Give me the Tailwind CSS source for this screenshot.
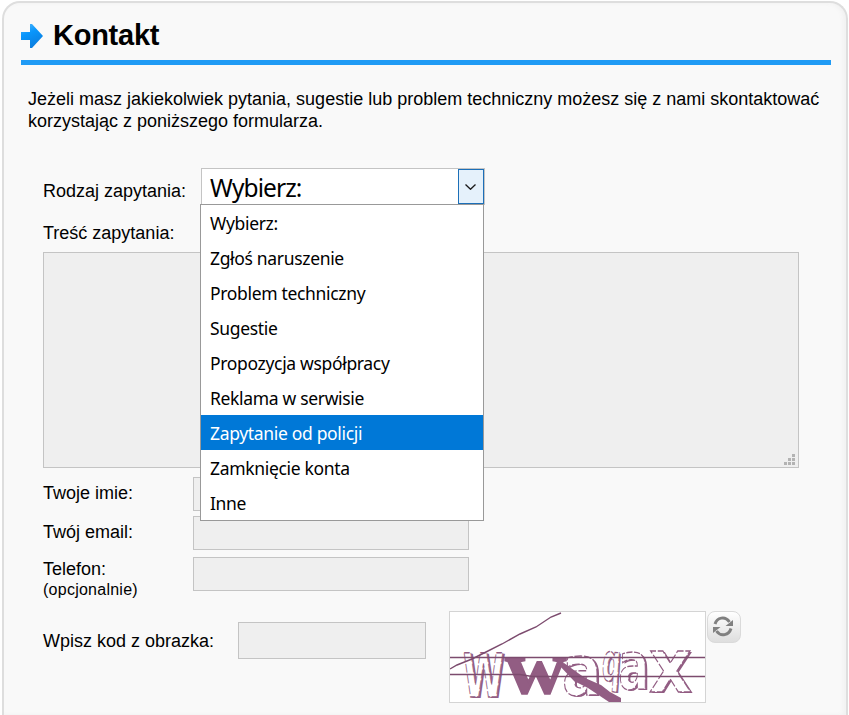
<!DOCTYPE html>
<html lang="pl">
<head>
<meta charset="utf-8">
<title>Kontakt</title>
<script src="https://cdn.jsdelivr.net/npm/@tailwindcss/browser@4"></script>
</head>
<body class="h-[715px] overflow-hidden bg-white pt-px pl-0.5 font-['Liberation_Sans',Arial,sans-serif] text-[18px] leading-[22px] text-black">
<main class="h-[714px] w-[846px] rounded-t-[18px] border-2 border-b-0 border-[#dedede] bg-[#f9f9f9] pl-[17px] pr-[14px] shadow-[inset_-3px_0_4px_#f1f1f1]">
  <header class="flex h-[62px] w-[810px] items-start border-b-[5px] border-[#209bf5]">
    <svg class="mt-[21px] h-6 w-[22px]" viewBox="0 0 22 24">
      <defs><linearGradient id="arrow" x1="0" y1="0" x2="0.4" y2="1"><stop offset="0" stop-color="#57b9fb"/><stop offset=".45" stop-color="#0996fc"/><stop offset="1" stop-color="#0b7fe0"/></linearGradient></defs>
      <path d="M0 8h9V0h2l11 12-11 12H9v-8H0z" fill="url(#arrow)"/>
    </svg>
    <h1 class="mt-[14px] ml-[10px] text-[29px] leading-[36px] font-bold tracking-[-0.25px]">Kontakt</h1>
  </header>
  <p class="mt-[23px] ml-[7px] whitespace-nowrap">Jeżeli masz jakiekolwiek pytania, sugestie lub problem techniczny możesz się z nami skontaktować<br>korzystając z poniższego formularza.</p>

  <form class="mt-[36px] ml-[22px]">
    <div class="relative flex h-[37px]">
      <label class="mt-[12px] w-[158px]">Rodzaj zapytania:</label>
      <div class="flex h-[37px] w-[284px] justify-between border border-[#c4c4c4] bg-white pr-px font-['Noto_Sans',sans-serif]">
        <span class="pl-2 text-[24.500px] leading-[38px] tracking-[-0.9px]">Wybierz:</span>
        <span class="-mr-px flex w-[26px] items-center justify-center border border-[#1c6fb8] bg-[#e5f1fb] pr-[2px]">
          <svg class="h-[6px] w-[11px]" viewBox="0 0 11 6" fill="none" stroke="#1a1a1a" stroke-width="1.3"><path d="M.5.5 5.5 5.3 10.5.5"/></svg>
        </span>
      </div>
      <ul class="absolute top-9 left-[157px] z-10 h-[317px] w-[284px] border border-[#999] bg-white font-['Noto_Sans',sans-serif] text-[17.500px] leading-[36px] tracking-[-0.33px] whitespace-nowrap *:h-[35px] *:pl-[9px]">
        <li>Wybierz:</li>
        <li>Zgłoś naruszenie</li>
        <li>Problem techniczny</li>
        <li>Sugestie</li>
        <li>Propozycja współpracy</li>
        <li>Reklama w serwisie</li>
        <li class="bg-[#0078d7] text-white">Zapytanie od policji</li>
        <li>Zamknięcie konta</li>
        <li>Inne</li>
      </ul>
    </div>
    <div class="mt-[17px] h-[30px]"><label>Treść zapytania:</label></div>
    <div class="flex h-[216px] w-[756px] items-end justify-end border border-[#c4c4c4] bg-[#efefef] pr-[3px] pb-[2px]">
      <svg class="h-[11px] w-[11px]" viewBox="0 0 11 11" fill="#b3b3b3"><path d="M8 0h3v3H8zM4 4h3v3H4zM8 4h3v3H8zM0 8h3v3H0zM4 8h3v3H4zM8 8h3v3H8z"/></svg>
    </div>
    <div class="mt-[9px] flex h-[34px]">
      <label class="mt-[5px] w-[150px]">Twoje imie:</label>
      <div class="h-[34px] w-[276px] border border-[#c4c4c4] bg-[#efefef]"></div>
    </div>
    <div class="mt-[5px] flex h-[34px]">
      <label class="mt-[5px] w-[150px]">Twój email:</label>
      <div class="h-[34px] w-[276px] border border-[#c4c4c4] bg-[#efefef]"></div>
    </div>
    <div class="mt-[7px] flex h-[54px]">
      <label class="mt-px w-[150px]">Telefon:<small class="block text-[16px] leading-5 tracking-[0.25px]">(opcjonalnie)</small></label>
      <div class="h-[34px] w-[276px] border border-[#c4c4c4] bg-[#efefef]"></div>
    </div>
    <div class="flex items-start">
      <label class="mt-[19px] w-[195px]">Wpisz kod z obrazka:</label>
      <div class="mt-[11px] h-[37px] w-[188px] border border-[#c4c4c4] bg-[#efefef]"></div>
      <div class="ml-[23px] h-[92px] w-[257px] border border-[#d4d4d4] bg-white">
        <svg class="h-[90px] w-[255px]" viewBox="0 0 255 90">
          <!-- hollow letters: an offset purple copy gives the heavy right edge -->
          <g font-family="DejaVu Sans" font-weight="bold" fill="#925d83">
            <text transform="translate(15 85.500) scale(.62 1)" font-size="60">W</text>
            <text transform="translate(114 83.500) scale(.84 1)" font-size="70">a</text>
            <text transform="translate(152.500 69) rotate(4) scale(.5 1)" font-size="52">q</text>
            <text transform="translate(170.500 77.500) scale(.68 1)" font-size="66">a</text>
            <text transform="translate(201 81) scale(.88 1)" font-size="75">x</text>
          </g>
          <g font-family="DejaVu Sans" font-weight="bold" fill="#fff" stroke="#925d83" stroke-width="1.300" stroke-dasharray="9 2">
            <text transform="translate(13 84.500) scale(.62 1)" font-size="60">W</text>
            <text transform="translate(112 82.500) scale(.84 1)" font-size="70">a</text>
            <text transform="translate(151 68) rotate(4) scale(.5 1)" font-size="52">q</text>
            <text transform="translate(168.500 76.500) scale(.68 1)" font-size="66">a</text>
            <text transform="translate(199 80) scale(.88 1)" font-size="75">x</text>
          </g>
          <text transform="translate(55 81) scale(1.120 1)" font-family="Liberation Serif" font-weight="bold" font-size="76" fill="#925d83" stroke="#925d83" stroke-width="1.500">w</text>
          <path d="M108 52 114 51 135 66 151 73 160 80 171 86 171 90H159L138 76 124 69Z" fill="#925d83"/>
          <g fill="none" stroke="#7c4b6e" stroke-width="1.400">
            <path d="M0 57 7 53 22 47 36 40 52 32 70 22 86 15 101 5 111 1"/>
            <path d="M0 45.500H255M0 62.500H70L82 64.500H255"/>
          </g>
        </svg>
      </div>
      <button type="button" aria-label="Odśwież" class="ml-px flex h-8 w-[34px] items-center justify-center rounded-[8px] border border-[#dadada] bg-linear-to-b from-white to-[#dedede]">
        <svg class="mb-[2px] mr-[2px] h-[21px] w-[22px]" viewBox="0 0 22 21" fill="none" stroke="#808080" stroke-width="3"><path d="M3 8C5 1.500 13-.5 17.500 6M19 12.500C17 19 9 21.500 4.500 15"/><path d="M21 4V10H13.500zM1 17V11H8.500z" fill="#808080" stroke="none"/></svg>
      </button>
    </div>
  </form>
</main>
</body>
</html>
